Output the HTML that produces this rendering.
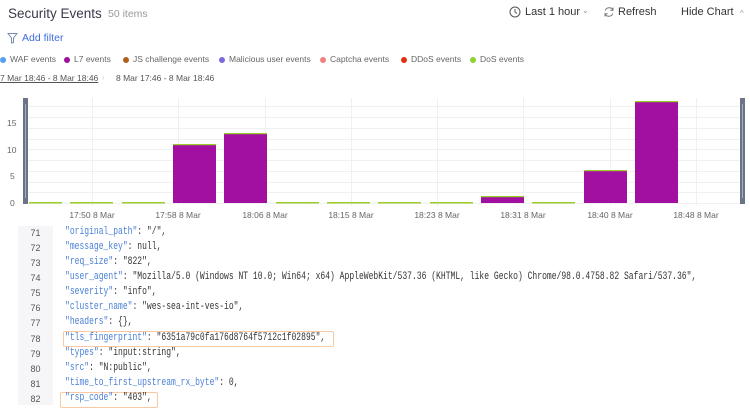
<!DOCTYPE html>
<html><head><meta charset="utf-8"><style>
*{margin:0;padding:0;box-sizing:border-box}
body{width:750px;height:405px;background:#fff;font-family:"Liberation Sans",sans-serif;position:relative;overflow:hidden;color:#333}
.a{position:absolute;white-space:nowrap}
.lg{font-size:8.5px;color:#666;top:54px}
.dot{display:inline-block;width:6px;height:6px;border-radius:50%;margin-right:4px;vertical-align:-0.5px}
.code{font-family:"Liberation Mono",monospace;font-size:11px;color:#333;transform:scaleX(0.73);transform-origin:0 0}
.k{color:#4a7fd6}
.ln{font-family:"Liberation Sans",sans-serif;font-size:9px;color:#555;width:35px;text-align:center;left:18px}
</style></head><body>
<div class="a" style="left:8px;top:6px;font-size:13.5px;color:#3a3a4a">Security Events</div>
<div class="a" style="left:108px;top:8px;font-size:10.5px;color:#999">50 items</div>
<svg class="a" style="left:509px;top:6px" width="12" height="12" viewBox="0 0 12 12"><circle cx="6" cy="6" r="5" fill="none" stroke="#555" stroke-width="1"/><path d="M6 3v3l2 1.5" fill="none" stroke="#555" stroke-width="1"/></svg>
<div class="a" style="left:525px;top:6px;font-size:11px;color:#333">Last 1 hour</div>
<div class="a" style="left:582px;top:6px;font-size:8px;color:#999">⌄</div>
<svg class="a" style="left:603px;top:6px" width="12" height="12" viewBox="0 0 12 12"><path d="M10 4A4.3 4.3 0 0 0 2.2 4.5M2 8a4.3 4.3 0 0 0 7.8-.5" fill="none" stroke="#777" stroke-width="1"/><path d="M10 1.5V4.3H7.3M2 10.5V7.7H4.7" fill="none" stroke="#777" stroke-width="1"/></svg>
<div class="a" style="left:618px;top:6px;font-size:11px;color:#333">Refresh</div>
<div class="a" style="left:681px;top:6px;font-size:11px;color:#333">Hide Chart</div>
<div class="a" style="left:740px;top:9px;font-size:8px;color:#999">^</div>
<svg class="a" style="left:7px;top:32px" width="11" height="12" viewBox="0 0 11 12"><path d="M1 1.5h9L6.5 6v4.5L4.5 11V6z" fill="none" stroke="#7a8ab0" stroke-width="1"/></svg>
<div class="a" style="left:22px;top:32px;font-size:10.5px;color:#3e6ce0">Add filter</div>
<div class="a lg" style="left:0px"><span class="dot" style="background:#5a9df0"></span>WAF events</div>
<div class="a lg" style="left:64px"><span class="dot" style="background:#a010a0"></span>L7 events</div>
<div class="a lg" style="left:123px"><span class="dot" style="background:#b0601a"></span>JS challenge events</div>
<div class="a lg" style="left:219px"><span class="dot" style="background:#7a6adf"></span>Malicious user events</div>
<div class="a lg" style="left:320px"><span class="dot" style="background:#f08080"></span>Captcha events</div>
<div class="a lg" style="left:401px"><span class="dot" style="background:#e03010"></span>DDoS events</div>
<div class="a lg" style="left:470px"><span class="dot" style="background:#90d030"></span>DoS events</div>
<div class="a" style="left:0;top:73px;font-size:8.5px;color:#555;text-decoration:underline">7 Mar 18:46 - 8 Mar 18:46</div>
<div class="a" style="left:102px;top:73px;font-size:8px;color:#ccc">›</div>
<div class="a" style="left:116px;top:73px;font-size:8.5px;color:#555">8 Mar 17:46 - 8 Mar 18:46</div>

<svg class="a" style="left:0;top:90px" width="750" height="135" viewBox="0 90 750 135" font-family="Liberation Sans" font-size="8.5" fill="#666">
<g stroke="#f0f0f3" stroke-width="1">
<line x1="26" x2="742" y1="106.5" y2="106.5"/><line x1="26" x2="742" y1="117.5" y2="117.5"/><line x1="26" x2="742" y1="128.5" y2="128.5"/><line x1="26" x2="742" y1="139.5" y2="139.5"/><line x1="26" x2="742" y1="149.5" y2="149.5"/><line x1="26" x2="742" y1="160.5" y2="160.5"/><line x1="26" x2="742" y1="171.5" y2="171.5"/><line x1="26" x2="742" y1="182.5" y2="182.5"/><line x1="26" x2="742" y1="192.5" y2="192.5"/><line x1="26" x2="742" y1="203.5" y2="203.5"/>
<line x1="92.5" x2="92.5" y1="98" y2="206"/><line x1="178.5" x2="178.5" y1="98" y2="206"/><line x1="265.5" x2="265.5" y1="98" y2="206"/><line x1="351.5" x2="351.5" y1="98" y2="206"/><line x1="437.5" x2="437.5" y1="98" y2="206"/><line x1="523.5" x2="523.5" y1="98" y2="206"/><line x1="610.5" x2="610.5" y1="98" y2="206"/><line x1="696.5" x2="696.5" y1="98" y2="206"/>
</g>
<text x="7" y="126">15</text><text x="7" y="153">10</text><text x="10" y="179">5</text><text x="10" y="206">0</text>
<g fill="#a210a2">
<rect x="173" y="145" width="43" height="58"/><rect x="224" y="134" width="43" height="69"/><rect x="481" y="197" width="43" height="6"/><rect x="584" y="171" width="43" height="32"/><rect x="635" y="102" width="43" height="101"/>
</g>
<g fill="#9ccc2a">
<rect x="29" y="202" width="33" height="1.5"/><rect x="70" y="202" width="43" height="1.5"/><rect x="122" y="202" width="43" height="1.5"/><rect x="173" y="144" width="43" height="1.2"/><rect x="224" y="133" width="43" height="1.2"/><rect x="276" y="202" width="43" height="1.5"/><rect x="327" y="202" width="43" height="1.5"/><rect x="378" y="202" width="43" height="1.5"/><rect x="430" y="202" width="43" height="1.5"/><rect x="481" y="196" width="43" height="1.2"/><rect x="532" y="202" width="43" height="1.5"/><rect x="584" y="170" width="43" height="1.2"/><rect x="635" y="101" width="43" height="1.2"/>
</g>
<rect x="23" y="98" width="5" height="106" fill="#6b7486"/><rect x="25" y="104" width="1" height="94" fill="#a8afbc"/>
<rect x="740" y="98" width="5" height="106" fill="#6b7486"/><rect x="742" y="104" width="1" height="94" fill="#a8afbc"/>
<g text-anchor="middle"><text x="92" y="218">17:50 8 Mar</text><text x="178" y="218">17:58 8 Mar</text><text x="265" y="218">18:06 8 Mar</text><text x="351" y="218">18:15 8 Mar</text><text x="437" y="218">18:23 8 Mar</text><text x="523" y="218">18:31 8 Mar</text><text x="610" y="218">18:40 8 Mar</text><text x="696" y="218">18:48 8 Mar</text></g>
</svg>

<div class="a" style="left:18px;top:226px;width:35px;height:179px;background:#f6f6f8"></div>
<div class="a" style="left:63px;top:331px;width:271px;height:16px;border:1px solid #f8c9a2;border-radius:2px"></div>
<div class="a" style="left:60px;top:392px;width:98px;height:16px;border:1px solid #f8c9a2;border-radius:2px"></div>

<div class="a ln" style="top:228px">71</div><div class="a code" style="left:65px;top:226px"><span class="k">"original_path"</span>: "/",</div>
<div class="a ln" style="top:243px">72</div><div class="a code" style="left:65px;top:241px"><span class="k">"message_key"</span>: null,</div>
<div class="a ln" style="top:258px">73</div><div class="a code" style="left:65px;top:256px"><span class="k">"req_size"</span>: "822",</div>
<div class="a ln" style="top:273px">74</div><div class="a code" style="left:65px;top:271px"><span class="k">"user_agent"</span>: "Mozilla/5.0 (Windows NT 10.0; Win64; x64) AppleWebKit/537.36 (KHTML, like Gecko) Chrome/98.0.4758.82 Safari/537.36",</div>
<div class="a ln" style="top:288px">75</div><div class="a code" style="left:65px;top:286px"><span class="k">"severity"</span>: "info",</div>
<div class="a ln" style="top:303px">76</div><div class="a code" style="left:65px;top:301px"><span class="k">"cluster_name"</span>: "wes-sea-int-ves-io",</div>
<div class="a ln" style="top:318px">77</div><div class="a code" style="left:65px;top:316px"><span class="k">"headers"</span>: {},</div>
<div class="a ln" style="top:334px">78</div><div class="a code" style="left:65px;top:332px"><span class="k">"tls_fingerprint"</span>: "6351a79c0fa176d8764f5712c1f02895",</div>
<div class="a ln" style="top:349px">79</div><div class="a code" style="left:65px;top:347px"><span class="k">"types"</span>: "input:string",</div>
<div class="a ln" style="top:364px">80</div><div class="a code" style="left:65px;top:362px"><span class="k">"src"</span>: "N:public",</div>
<div class="a ln" style="top:379px">81</div><div class="a code" style="left:65px;top:377px"><span class="k">"time_to_first_upstream_rx_byte"</span>: 0,</div>
<div class="a ln" style="top:394px">82</div><div class="a code" style="left:65px;top:392px"><span class="k">"rsp_code"</span>: "403",</div>
</body></html>
